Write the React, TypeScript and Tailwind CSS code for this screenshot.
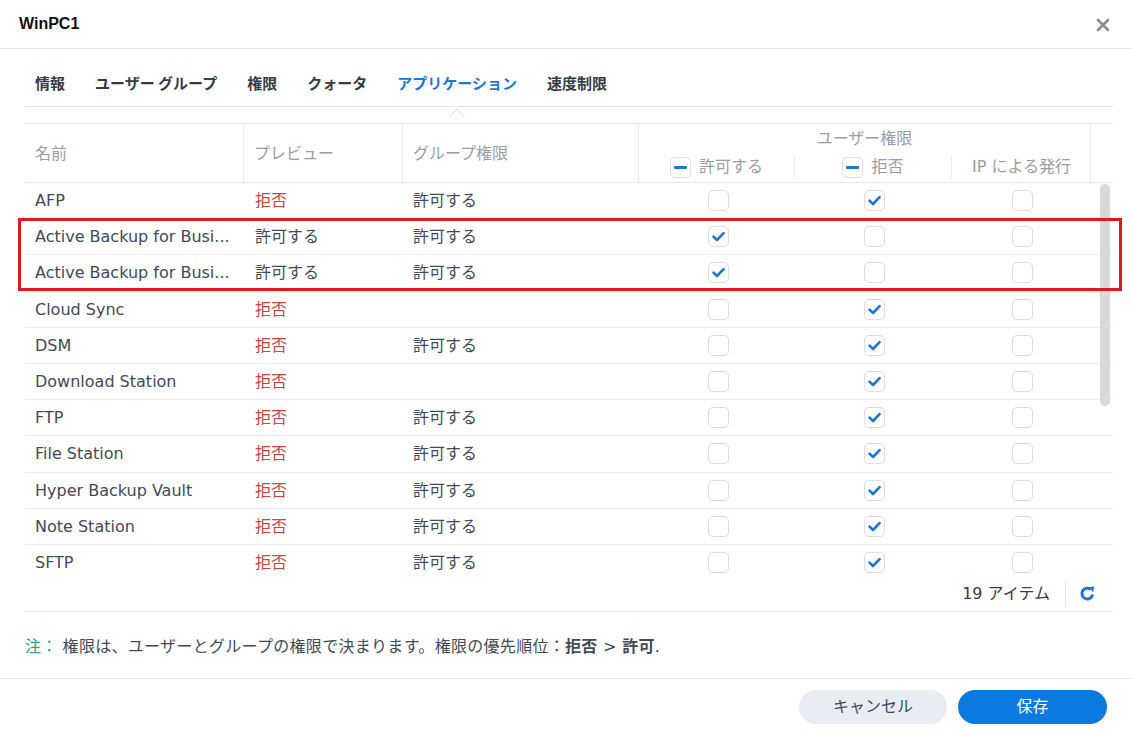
import React from "react";

type Row = {
  name: string;
  preview: "allow" | "deny";
  group: string;
  allow: boolean;
  deny: boolean;
  ip: boolean;
};

const rows: Row[] = [
  { name: "AFP", preview: "deny", group: "許可する", allow: false, deny: true, ip: false },
  { name: "Active Backup for Busi...", preview: "allow", group: "許可する", allow: true, deny: false, ip: false },
  { name: "Active Backup for Busi...", preview: "allow", group: "許可する", allow: true, deny: false, ip: false },
  { name: "Cloud Sync", preview: "deny", group: "", allow: false, deny: true, ip: false },
  { name: "DSM", preview: "deny", group: "許可する", allow: false, deny: true, ip: false },
  { name: "Download Station", preview: "deny", group: "", allow: false, deny: true, ip: false },
  { name: "FTP", preview: "deny", group: "許可する", allow: false, deny: true, ip: false },
  { name: "File Station", preview: "deny", group: "許可する", allow: false, deny: true, ip: false },
  { name: "Hyper Backup Vault", preview: "deny", group: "許可する", allow: false, deny: true, ip: false },
  { name: "Note Station", preview: "deny", group: "許可する", allow: false, deny: true, ip: false },
  { name: "SFTP", preview: "deny", group: "許可する", allow: false, deny: true, ip: false },
];

const tabs = ["情報", "ユーザー グループ", "権限", "クォータ", "アプリケーション", "速度制限"];

function Checkbox({ checked }: { checked: boolean }) {
  return (
    <div className="w-[21px] h-[21px] rounded-[5px] border border-[#d9dee4] bg-white flex items-center justify-center">
      {checked && (
        <svg width="15" height="15" viewBox="0 0 15 15">
          <path d="M2.5 7.6 L6 11 L12.6 4.2" fill="none" stroke="#1d76d2" strokeWidth="2.6" strokeLinecap="round" strokeLinejoin="round" />
        </svg>
      )}
    </div>
  );
}

function MinusBox() {
  return (
    <div className="w-[21px] h-[21px] rounded-[5px] border border-[#d9dee4] bg-white flex items-center justify-center">
      <div className="w-[13px] h-[3px] rounded-[1px] bg-[#1d76d2]" />
    </div>
  );
}

export default function App() {
  return (
    <div
      className="relative w-[1132px] h-[734px] bg-white flex flex-col overflow-hidden"
      style={{ fontFamily: '"DejaVu Sans", "Noto Sans CJK JP", sans-serif' }}
    >
      {/* Header */}
      <div className="h-[49px] shrink-0 border-b border-[#e3e6ea] flex items-center justify-between pl-[19px] pr-[22px]">
        <span className="text-[16px] font-bold text-[#111] font-['Liberation_Sans','Noto_Sans_CJK_JP',sans-serif]">WinPC1</span>
        <svg width="14" height="14" viewBox="0 0 14 14" className="mt-[2px]">
          <path d="M2 2 L12 12 M12 2 L2 12" stroke="#8d8d8d" strokeWidth="2.6" strokeLinecap="round" />
        </svg>
      </div>

      <div className="flex-1 flex flex-col pl-[25px] pr-[19px]">
        {/* Tabs */}
        <div className="relative h-[58px] shrink-0 border-b border-[#dfe3e8] flex items-start pt-[21px] pl-[10px] gap-[30px] font-['Noto_Sans_CJK_JP',sans-serif]">
          {tabs.map((t) => {
            const active = t === "アプリケーション";
            return (
              <div key={t} className="relative">
                <span className={`text-[15px] leading-[20px] font-bold whitespace-pre ${active ? "text-[#1f78d4]" : "text-[#353c45]"}`}>{t}</span>
                {active && (
                  <div className="absolute left-1/2 -translate-x-1/2 top-[41px] w-[11px] h-[11px] rotate-45 bg-white border-l border-t border-[#dfe3e8]" />
                )}
              </div>
            );
          })}
        </div>

        {/* Table */}
        <div className="mt-[16px] border-t border-[#e3e6ea]">
          {/* Header */}
          <div className="grid grid-cols-[219px_159px_236px_452px_22px] h-[59px] border-b border-[#e6e9ed] text-[16px] text-[#9a9ea3]">
            <div className="flex items-center pl-[10px] pt-[1px] border-r border-[#e9ebee]">名前</div>
            <div className="flex items-center pl-[10px] pt-[1px] border-r border-[#e9ebee]">プレビュー</div>
            <div className="flex items-center pl-[10px] pt-[1px] border-r border-[#e9ebee]">グループ権限</div>
            <div className="flex flex-col border-r border-[#e9ebee]">
              <div className="h-[29px] flex items-end justify-center leading-[20px] pb-[4px]">ユーザー権限</div>
              <div className="flex-1 grid grid-cols-[156px_157px_139px] items-center pb-[1px]">
                <div className="flex items-center justify-center gap-[8px] border-r border-[#e9ebee] h-[22px]">
                  <MinusBox />
                  <span>許可する</span>
                </div>
                <div className="flex items-center justify-center gap-[8px] border-r border-[#e9ebee] h-[22px]">
                  <MinusBox />
                  <span>拒否</span>
                </div>
                <div className="flex items-center justify-center h-[22px]">IP による発行</div>
              </div>
            </div>
            <div />
          </div>

          {/* Body */}
          <div className="relative h-[393px] overflow-hidden">
            {rows.map((r, i) => (
              <div key={i} className="grid grid-cols-[219px_159px_236px_156px_157px_139px_22px] h-[36.2px] border-b border-[#eceef1] items-center text-[16px] text-[#414b55]">
                <div className="pl-[10px] pt-[1px] whitespace-nowrap">{r.name}</div>
                <div className={`pl-[11px] pt-[1px] ${r.preview === "deny" ? "text-[#c9473f]" : ""}`}>{r.preview === "deny" ? "拒否" : "許可する"}</div>
                <div className="pl-[10px] pt-[1px]">{r.group}</div>
                <div className="flex justify-center pl-[2px]"><Checkbox checked={r.allow} /></div>
                <div className="flex justify-center pl-[2px]"><Checkbox checked={r.deny} /></div>
                <div className="flex justify-center pl-[2px]"><Checkbox checked={r.ip} /></div>
                <div />
              </div>
            ))}
            <div className="absolute right-[3px] top-[1px] w-[10px] h-[222px] rounded-full bg-[#d9d9d9]" />
          </div>

          {/* Toolbar */}
          <div className="h-[36px] border-b border-[#e3e6ea] flex items-center justify-end pr-[17px]">
            <span className="text-[16px] text-[#353c45]">19 アイテム</span>
            <div className="w-px h-[24px] bg-[#e3e6ea] ml-[15px] mr-[13px]" />
            <svg width="17" height="17" viewBox="0 0 17 17">
              <path d="M13.6 9.5 A5.4 5.4 0 1 1 11.6 4.3" fill="none" stroke="#1d76d2" strokeWidth="3" strokeLinecap="butt" />
              <path d="M9.3 2.2 L15.2 1.6 L14.2 7.3 Z" fill="#1d76d2" />
            </svg>
          </div>
        </div>

        {/* Note */}
        <div className="mt-[23px] text-[16px] leading-[24px] text-[#414b55] tracking-[0.3px]">
          <span className="text-[#2aa0a0]">注：</span>
          <span className="ml-[5px]">権限は、ユーザーとグループの権限で決まります。権限の優先順位：</span>
          <span className="font-bold">拒否</span>
          <span> &gt; </span>
          <span className="font-bold">許可</span>
          <span>.</span>
        </div>
      </div>

      {/* Footer */}
      <div className="h-[56px] shrink-0 border-t border-[#e3e6ea] flex items-start justify-end pt-[11px] pr-[25px] gap-[11px]">
        <button className="w-[148px] h-[34px] rounded-full bg-[#e8edf3] text-[16px] text-[#414b55]">キャンセル</button>
        <button className="w-[149px] h-[34px] rounded-full bg-[#0a7ae0] text-[16px] text-white">保存</button>
      </div>

      {/* Annotation rectangle */}
      <div className="absolute left-[18px] top-[218px] w-[1104px] h-[73px] border-[3px] border-[#e1181f] pointer-events-none" />
    </div>
  );
}
